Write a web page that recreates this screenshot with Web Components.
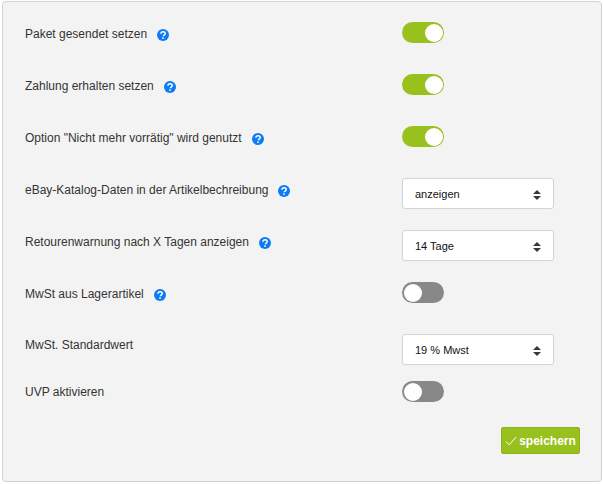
<!DOCTYPE html>
<html lang="de">
<head>
<meta charset="utf-8">
<title>Einstellungen</title>
<style>
html, body { margin: 0; background: #fff; }
body { font-family: "Liberation Sans", Arial, sans-serif; }
</style>
</head>
<body>
<settings-panel>
  <setting-row help>
    Paket gesendet setzen
    <toggle-switch slot="control" on></toggle-switch>
  </setting-row>
  <setting-row help>
    Zahlung erhalten setzen
    <toggle-switch slot="control" on></toggle-switch>
  </setting-row>
  <setting-row help>
    Option "Nicht mehr vorrätig" wird genutzt
    <toggle-switch slot="control" on></toggle-switch>
  </setting-row>
  <setting-row help>
    eBay-Katalog-Daten in der Artikelbechreibung
    <select-box slot="control">anzeigen</select-box>
  </setting-row>
  <setting-row help>
    Retourenwarnung nach X Tagen anzeigen
    <select-box slot="control">14 Tage</select-box>
  </setting-row>
  <setting-row help>
    MwSt aus Lagerartikel
    <toggle-switch slot="control"></toggle-switch>
  </setting-row>
  <setting-row compact>
    MwSt. Standardwert
    <select-box slot="control">19 % Mwst</select-box>
  </setting-row>
  <setting-row last>
    UVP aktivieren
    <toggle-switch slot="control"></toggle-switch>
  </setting-row>
  <save-button slot="footer">speichern</save-button>
</settings-panel>

<script>
class SettingsPanel extends HTMLElement {
    constructor() {
        super();
        this.shadowDOM = this.attachShadow({ mode: "open" });
        this.shadowDOM.innerHTML = `
        <style>
        :host {
            display: block;
            box-sizing: border-box;
            width: 600px;
            height: 481px;
            margin: 1px 0 0 2px;
            padding: 20px 22px 0 22px;
            background: #f3f3f3;
            border: 1px solid #d2d2d2;
            border-radius: 4px;
            color: #333;
            font-family: "Liberation Sans", Arial, sans-serif;
        }

        #footer {
            display: flex;
            justify-content: flex-end;
            padding-top: 25px;
        }
        </style>
        <slot></slot>
        <div id="footer"><slot name="footer"></slot></div>
        `;
    }
}

class SettingRow extends HTMLElement {
    constructor() {
        super();
        this.shadowDOM = this.attachShadow({ mode: "open" });
    }

    connectedCallback() {
        const icon = this.hasAttribute("help") ? "<help-icon></help-icon>" : "";
        this.shadowDOM.innerHTML = `
        <style>
        :host {
            display: grid;
            grid-template-columns: 377px 1fr;
            height: 52px;
            font-size: 12px;
            line-height: 21px;
        }

        :host([compact]) {
            height: 47px;
        }

        :host([last]) {
            height: 21px;
        }

        #label {
            display: flex;
            align-items: center;
            gap: 10px;
            height: 21px;
            padding-top: 2px;
        }

        :host([compact]) #label,
        :host([last]) #label {
            padding-top: 1px;
        }

        #control {
            display: block;
        }
        </style>
        <div id="label"><span><slot></slot></span>${icon}</div>
        <div id="control"><slot name="control"></slot></div>
        `;
    }
}

class HelpIcon extends HTMLElement {
    constructor() {
        super();
        this.shadowDOM = this.attachShadow({ mode: "open" });
        this.shadowDOM.innerHTML = `
        <style>
        :host {
            display: block;
            width: 12px;
            height: 12px;
            margin-top: 1px;
        }
        svg {
            display: block;
        }
        </style>
        <svg width="12" height="12" viewBox="0 0 12 12">
            <circle cx="6" cy="6" r="6" fill="#0d7bf5"/>
            <path d="M3.9 4.7C4 3.4 4.9 2.7 6.1 2.7c1.2 0 2.1.7 2.1 1.8 0 .9-.5 1.3-1.1 1.7-.5.3-.7.5-.7 1" fill="none" stroke="#fff" stroke-width="1.5"/>
            <rect x="5.2" y="8.3" width="1.6" height="1.5" fill="#fff"/>
        </svg>
        `;
    }
}

class ToggleSwitch extends HTMLElement {
    constructor() {
        super();
        this.shadowDOM = this.attachShadow({ mode: "open" });
        this.shadowDOM.innerHTML = `
        <style>
        :host {
            display: flex;
            box-sizing: border-box;
            width: 42px;
            height: 21px;
            padding: 1.5px 2px;
            border-radius: 11px;
            background: #888;
        }
        :host([on]) {
            background: #98c11d;
            justify-content: flex-end;
            padding: 1.5px;
        }
        #knob {
            width: 18px;
            height: 18px;
            border-radius: 50%;
            background: #fff;
        }
        </style>
        <div id="knob"></div>
        `;
    }
}

class SelectBox extends HTMLElement {
    constructor() {
        super();
        this.shadowDOM = this.attachShadow({ mode: "open" });
        this.shadowDOM.innerHTML = `
        <style>
        :host {
            display: flex;
            align-items: center;
            justify-content: space-between;
            box-sizing: border-box;
            width: 152px;
            height: 31px;
            padding: 2px 12px 0;
            background: #fff;
            border: 1px solid #ced4da;
            border-radius: 3px;
            color: #111;
            font-size: 11px;
        }
        svg {
            display: block;
        }
        </style>
        <span><slot></slot></span>
        <svg width="8" height="10" viewBox="0 0 8 10">
            <path d="M4 0 8 4H0ZM0 6H8L4 10Z" fill="#343a40"/>
        </svg>
        `;
    }
}

class SaveButton extends HTMLElement {
    constructor() {
        super();
        this.shadowDOM = this.attachShadow({ mode: "open" });
        this.shadowDOM.innerHTML = `
        <style>
        :host {
            display: flex;
            align-items: center;
            justify-content: center;
            gap: 2px;
            box-sizing: border-box;
            width: 79px;
            height: 27px;
            margin-right: -1px;
            background: #98c11d;
            border: 1px solid #8cb21a;
            border-radius: 2px;
            color: #fff;
            font-size: 12px;
            font-weight: 700;
        }
        svg {
            display: block;
        }
        </style>
        <svg width="12" height="10" viewBox="0 0 12 10">
            <path d="M1 5.5 4.2 8.8 11 1.2" fill="none" stroke="#fff" stroke-width="1"/>
        </svg>
        <span><slot></slot></span>
        `;
    }
}

customElements.define("settings-panel", SettingsPanel);
customElements.define("setting-row", SettingRow);
customElements.define("help-icon", HelpIcon);
customElements.define("toggle-switch", ToggleSwitch);
customElements.define("select-box", SelectBox);
customElements.define("save-button", SaveButton);
</script>
</body>
</html>
